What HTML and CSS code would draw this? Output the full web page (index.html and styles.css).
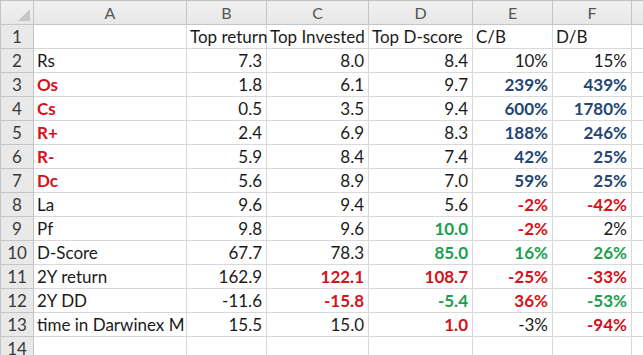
FILE: index.html
```html
<!DOCTYPE html>
<html lang="en">
<head>
  <meta charset="UTF-8">
  <title>Sheet1</title>
  <link rel="stylesheet" href="styles.css">
</head>
<body>

<!-- Spreadsheet -->
<table class="sheet">
  <colgroup>
    <col class="w-head">
    <col class="w-a">
    <col class="w-b">
    <col class="w-c">
    <col class="w-d">
    <col class="w-e">
    <col class="w-f">
    <col class="w-g">
  </colgroup>
  <thead>
    <tr class="col-heads">
      <th class="corner"><div class="corner-tri"></div></th>
      <th>A</th><th>B</th><th>C</th><th>D</th><th>E</th><th>F</th><th></th>
    </tr>
  </thead>
  <tbody>
    <tr><th>1</th><td></td><td>Top return</td><td>Top Invested</td><td>Top D-score</td><td>C/B</td><td>D/B</td><td></td></tr>
    <tr><th>2</th><td>Rs</td><td class="num">7.3</td><td class="num">8.0</td><td class="num">8.4</td><td class="num">10%</td><td class="num">15%</td><td></td></tr>
    <tr><th>3</th><td class="red b">Os</td><td class="num">1.8</td><td class="num">6.1</td><td class="num">9.7</td><td class="num blue b">239%</td><td class="num blue b">439%</td><td></td></tr>
    <tr><th>4</th><td class="red b">Cs</td><td class="num">0.5</td><td class="num">3.5</td><td class="num">9.4</td><td class="num blue b">600%</td><td class="num blue b">1780%</td><td></td></tr>
    <tr><th>5</th><td class="red b">R+</td><td class="num">2.4</td><td class="num">6.9</td><td class="num">8.3</td><td class="num blue b">188%</td><td class="num blue b">246%</td><td></td></tr>
    <tr><th>6</th><td class="red b">R-</td><td class="num">5.9</td><td class="num">8.4</td><td class="num">7.4</td><td class="num blue b">42%</td><td class="num blue b">25%</td><td></td></tr>
    <tr><th>7</th><td class="red b">Dc</td><td class="num">5.6</td><td class="num">8.9</td><td class="num">7.0</td><td class="num blue b">59%</td><td class="num blue b">25%</td><td></td></tr>
    <tr><th>8</th><td>La</td><td class="num">9.6</td><td class="num">9.4</td><td class="num">5.6</td><td class="num red b">-2%</td><td class="num red b">-42%</td><td></td></tr>
    <tr><th>9</th><td>Pf</td><td class="num">9.8</td><td class="num">9.6</td><td class="num green b">10.0</td><td class="num red b">-2%</td><td class="num">2%</td><td></td></tr>
    <tr><th>10</th><td>D-Score</td><td class="num">67.7</td><td class="num">78.3</td><td class="num green b">85.0</td><td class="num green b">16%</td><td class="num green b">26%</td><td></td></tr>
    <tr><th>11</th><td>2Y return</td><td class="num">162.9</td><td class="num red b">122.1</td><td class="num red b">108.7</td><td class="num red b">-25%</td><td class="num red b">-33%</td><td></td></tr>
    <tr><th>12</th><td>2Y DD</td><td class="num">-11.6</td><td class="num red b">-15.8</td><td class="num green b">-5.4</td><td class="num red b">36%</td><td class="num green b">-53%</td><td></td></tr>
    <tr><th>13</th><td>time in Darwinex M</td><td class="num">15.5</td><td class="num">15.0</td><td class="num red b">1.0</td><td class="num">-3%</td><td class="num red b">-94%</td><td></td></tr>
    <tr><th>14</th><td></td><td></td><td></td><td></td><td></td><td></td><td></td></tr>
  </tbody>
</table>

</body>
</html>
```

FILE: styles.css
```css
body {
  margin: 0;
  background: #ffffff;
  overflow: hidden;
  font-family: Lato, 'Liberation Sans', sans-serif;
}
.sheet {
  border-collapse: collapse;
  table-layout: fixed;
  width: 643px;
  font-size: 17px;
  color: #1a1a1a;
  border-top: 1px solid #8e8e8e;
}
.w-head { width: 33px; }
.w-a { width: 153px; }
.w-b { width: 80px; }
.w-c { width: 102px; }
.w-d { width: 104px; }
.w-e { width: 80px; }
.w-f { width: 79px; }
.w-g { width: 12px; }
.sheet th, .sheet td {
  height: 23px;
  padding: 0 3px;
  white-space: nowrap;
  overflow: visible;
  border: 1px solid #d9d9d9;
  line-height: 22px;
}
.sheet th {
  background: #e9e9e9;
  border-color: #c4c4c4;
  font-weight: normal;
  color: #3a3a3a;
  text-align: center;
}
.col-heads th {
  height: 23px;
  color: #555555;
  font-size: 16px;
  background: linear-gradient(#f1f1f1, #e6e6e6);
}
.corner {
  position: relative;
}
.corner-tri {
  position: absolute;
  right: 3px;
  bottom: 3px;
  width: 0;
  height: 0;
  border-left: 12px solid transparent;
  border-bottom: 12px solid #c6c6c6;
}
.sheet td.num {
  text-align: right;
  padding-right: 4px;
}
.b { font-weight: bold; }
.red { color: #d3121a; }
.blue { color: #24466f; }
.green { color: #1d9e4f; }
```
